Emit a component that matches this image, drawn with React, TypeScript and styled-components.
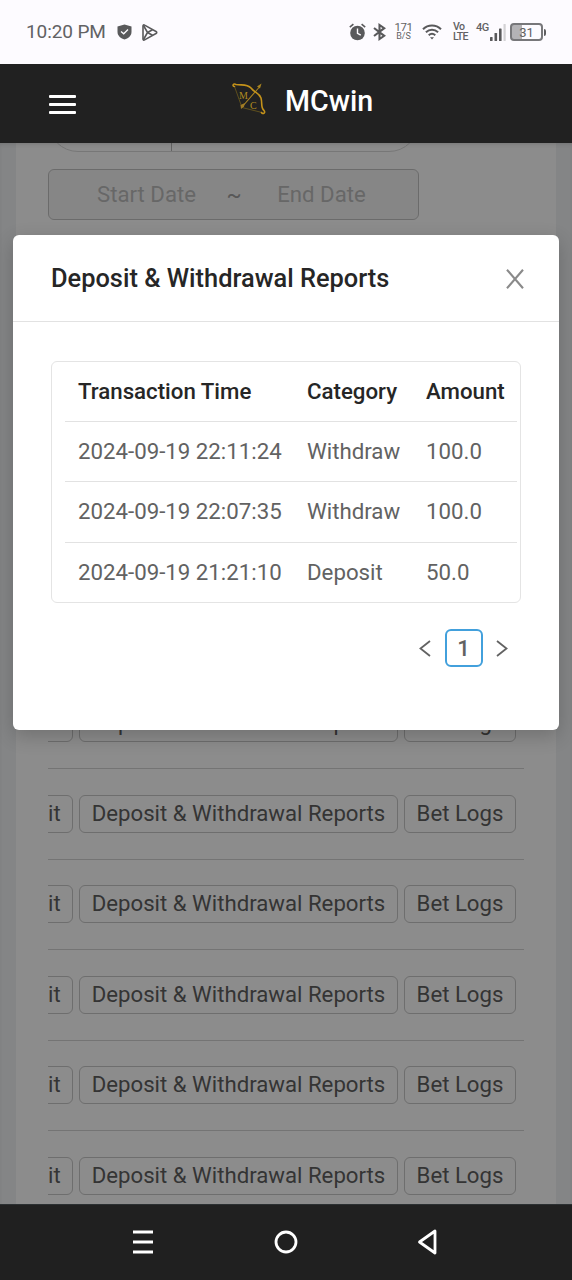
import React from "react";
import styled, { createGlobalStyle } from "styled-components";

const GlobalStyle = createGlobalStyle`
  * { box-sizing: border-box; }
  body { margin: 0; font-family: Roboto, sans-serif; background: #202020; }
  button { font-family: inherit; }
`;

const Screen = styled.div`
  width: 572px;
  height: 1280px;
  display: flex;
  flex-direction: column;
  overflow: hidden;
`;

const StatusBar = styled.div`
  height: 64px;
  flex: none;
  background: #fdfbff;
  color: #626264;
  display: flex;
  align-items: center;
  justify-content: space-between;
  padding: 0 26px 0 26px;
`;

const StatusGroup = styled.div<{ $gap: number }>`
  display: flex;
  align-items: center;
  gap: ${(p) => p.$gap}px;
  svg { display: block; flex: none; }
`;

const Clock = styled.span`
  font-size: 19px;
  letter-spacing: -0.1px;
  line-height: 24px;
  width: 78px;
  margin-right: 3px;
  white-space: nowrap;
`;

const Speed = styled.div`
  width: 18px;
  margin: -2px 2px 0 1px;
  display: flex;
  flex-direction: column;
  align-items: center;
  line-height: 10px;
  font-size: 11.5px;
  letter-spacing: -0.5px;
  span:last-child { font-size: 9px; letter-spacing: 0; line-height: 9px; }
`;

const Volte = styled.div`
  width: 23px;
  margin-left: 11px;
  display: flex;
  flex-direction: column;
  line-height: 10px;
  font-size: 10.6px;
  font-weight: 500;
  letter-spacing: -0.7px;
`;

const Network = styled.span`
  width: 14px;
  margin-top: -8px;
  font-size: 11px;
  line-height: 12px;
  font-weight: 500;
  letter-spacing: -0.5px;
`;

const Battery = styled.div`
  width: 33px;
  height: 18px;
  margin-left: 4px;
  border: 2px solid #77777a;
  border-radius: 4px;
  font-size: 13px;
  line-height: 13px;
  background: linear-gradient(90deg, #b4b3b6 10px, transparent 10px);
  display: flex;
  align-items: center;
  justify-content: center;
`;

const BatteryTip = styled.div`
  width: 2px;
  height: 7px;
  border-radius: 0 2px 2px 0;
  background: #5f5f61;
`;

const Header = styled.header`
  height: 79px;
  flex: none;
  background: #212121;
  display: flex;
  align-items: center;
  padding: 0 49px;
`;

const MenuButton = styled.div`
  width: 27px;
  margin-top: 2px;
  display: flex;
  flex-direction: column;
  gap: 5.5px;
  span { height: 2.8px; border-radius: 1px; background: #fff; }
`;

const Brand = styled.div`
  margin: -6px 0 0 154px;
  display: flex;
  align-items: center;
  gap: 17px;
  color: #fff;
  font-size: 28.6px;
  font-weight: 500;
  svg { display: block; margin-top: -5px; }
`;

const Content = styled.main`
  position: relative;
  flex: 1;
  min-height: 0;
  overflow: hidden;
  background: #f0f2f5;
`;

const Card = styled.section`
  height: 100%;
  margin: 0 16px;
  padding: 0 32px;
  background: #fff;
  overflow: hidden;
`;

const SearchGroup = styled.div`
  width: 371px;
  height: 60px;
  margin-top: -51px;
  border: 1px solid #d9d9d9;
  border-radius: 30px;
  display: flex;
`;

const SearchPrefix = styled.div`
  width: 123px;
  border-right: 1px solid #b4b4b4;
`;

const RangePicker = styled.div`
  width: 371px;
  height: 51px;
  margin-top: 17px;
  padding: 0 0 2px 20px;
  border: 1px solid #c4c4c4;
  border-radius: 6px;
  background: #f5f5f5;
  color: #bcbcbc;
  font-size: 22.2px;
  display: flex;
  align-items: center;
  span { text-align: center; width: 155px; }
  i { font-style: normal; width: 20px; text-align: center; color: #a0a0a0; }
`;

const UserList = styled.div`
  margin-top: 458.5px;
  width: 476px;
`;

const UserRow = styled.div`
  height: 90.55px;
  border-bottom: 1px solid #d4d4d4;
  overflow: hidden;
  display: flex;
  align-items: center;
  justify-content: flex-end;
  gap: 6px;
  padding-right: 8px;
`;

const ActionButton = styled.button<{ $width: number }>`
  flex: none;
  width: ${(p) => p.$width}px;
  height: 38px;
  padding: 0 0 2px;
  border: 1px solid #c8c8c8;
  border-radius: 6px;
  background: #fff;
  color: #5f5f5f;
  font-size: 22.2px;
  line-height: 34px;
  white-space: nowrap;
`;

const Mask = styled.div`
  position: absolute;
  inset: 0;
  background: rgba(0, 0, 0, 0.45);
  box-shadow: inset 0 3px 4px -2px rgba(0, 0, 0, 0.15);
`;

const Modal = styled.div`
  position: absolute;
  top: 92px;
  left: 13px;
  width: 546px;
  height: 495px;
  border-radius: 6px;
  background: #fff;
  box-shadow: 0 6px 19px rgba(0, 0, 0, 0.2);
`;

const ModalHeader = styled.div`
  height: 87px;
  border-bottom: 1px solid #e2e2e2;
  padding: 0 35px 0 38px;
  display: flex;
  align-items: center;
  justify-content: space-between;
  h2 { margin: 0; font-size: 25.4px; font-weight: 500; color: #262626; }
  svg { display: block; margin-top: 2px; }
`;

const ModalBody = styled.div`
  padding: 39px 38px 0;
`;

const Report = styled.div`
  height: 242px;
  border: 1px solid #e4e4e4;
  border-radius: 6px;
  padding: 0 3px 0 13px;
`;

const ReportRow = styled.div<{ $head?: boolean }>`
  height: ${(p) => (p.$head ? 60 : 60.3)}px;
  display: grid;
  grid-template-columns: 229px 119px 1fr;
  align-items: center;
  padding: 0 0 1px 13px;
  white-space: nowrap;
  border-bottom: 1px solid #e2e2e2;
  font-size: 22.25px;
  font-weight: ${(p) => (p.$head ? 500 : 400)};
  color: ${(p) => (p.$head ? "#262626" : "#626262")};
  &:last-child { border-bottom: 0; }
`;

const Pagination = styled.div`
  margin: 26px 13px 0 0;
  display: flex;
  align-items: center;
  justify-content: flex-end;
  gap: 13.5px;
  svg { display: block; }
`;

const Page = styled.span`
  width: 38px;
  height: 38px;
  border: 2px solid #42a0dc;
  border-radius: 6px;
  font-size: 22.2px;
  font-weight: 500;
  line-height: 34px;
  text-align: center;
  color: #626262;
`;

const NavBar = styled.nav`
  height: 76px;
  flex: none;
  background: #202020;
  border-top: 1px solid #2c3032;
  display: flex;
  align-items: center;
  justify-content: space-between;
  padding: 0 134px 2px 132px;
  svg { display: block; }
`;

const transactions = [
  ["2024-09-19 22:11:24", "Withdraw", "100.0"],
  ["2024-09-19 22:07:35", "Withdraw", "100.0"],
  ["2024-09-19 21:21:10", "Deposit", "50.0"],
];

const Logo = () => (
  <svg width="38" height="36" viewBox="0 0 38 36" fill="none">
    <path d="M4.500 6.500 L12 27.500 L32 32.500" stroke="#6d5a1c" strokeWidth="0.8" />
    <path d="M12 27 L29 7.500" stroke="#a98420" strokeWidth="1.1" />
    <path d="M27 6.500 L31.500 3.500 L30 8.500 Z" fill="#a98420" />
    <path d="M10.500 25 L15 23 L14 26.500 L11 29 Z" fill="#a07b25" />
    <path d="M4.500 6.500 C2 6.500 3 2.500 6 4.500 C12 5.500 17 3.500 21 8 C24 12.500 29 12.500 31 18 C32.500 23 30.500 28 34 30.500 C36 32.500 33 35 31.500 32.500" stroke="#c4921a" strokeWidth="1.6" strokeLinecap="round" />
    <text x="9" y="19" fontFamily="Liberation Serif, serif" fontSize="10" fill="#b08b20">M</text>
    <text x="20" y="28.500" fontFamily="Liberation Serif, serif" fontSize="10" fill="#b08b20">C</text>
  </svg>
);

const ShieldIcon = () => (
  <svg width="15" height="16" viewBox="0 0 15 16" fill="none">
    <path d="M7.500 0.500 L14.500 2.500 V8 C14.500 12 11 14.500 7.500 15.500 C4 14.500 0.500 12 0.500 8 V2.500 Z" fill="#59595b" />
    <path d="M4 7.500 L6.700 9.800 L11 5.500" stroke="#fdfbff" strokeWidth="1.300" />
  </svg>
);

const PlayIcon = () => (
  <svg width="16" height="17" viewBox="0 0 16 17" fill="none" stroke="#59595b" strokeWidth="1.600" strokeLinejoin="round">
    <path d="M1 2 C1 1 1.800 .6 2.600 1.100 L14 7.500 C15 8.100 15 8.900 14 9.500 L2.600 15.900 C1.800 16.400 1 16 1 15 Z" />
    <path d="M1.500 1.500 L5.500 8.500 L1.500 15.500 M5.500 8.500 L10.500 5.800 M5.500 8.500 L10.500 11.200" />
  </svg>
);

const AlarmIcon = () => (
  <svg width="17" height="18" viewBox="0 0 17 18" fill="none">
    <circle cx="8.500" cy="10" r="7.300" fill="#59595b" />
    <path d="M0.800 4.200 L4.400 1.200 M16.200 4.200 L12.600 1.200" stroke="#59595b" strokeWidth="1.600" />
    <path d="M8.500 5.500 V10.300 L11.800 12.200" stroke="#fdfbff" strokeWidth="1.400" />
  </svg>
);

const BluetoothIcon = () => (
  <svg width="13" height="18" viewBox="0 0 13 18" fill="none" stroke="#59595b" strokeWidth="2.100">
    <path d="M1 5 L11.200 12.800 L6.500 16 V2 L11.200 5.200 L1 13" />
  </svg>
);

const WifiIcon = () => (
  <svg width="20" height="16" viewBox="0 0 20 16" fill="none" stroke="#59595b" strokeWidth="2">
    <path d="M1 5.200 C6 .3 14 .3 19 5.200 M3.900 8.300 C7.500 5 12.500 5 16.100 8.300 M6.700 11.200 C8.700 9.500 11.300 9.500 13.300 11.200" />
    <path d="M8 13.200 H12 L10 15.600 Z" fill="#59595b" stroke="none" />
  </svg>
);

const SignalIcon = () => (
  <svg width="16" height="17" viewBox="0 0 16 17" fill="#59595b">
    <rect x="0" y="13" width="2.600" height="4" rx=".6" />
    <rect x="4.500" y="9" width="2.600" height="8" rx=".6" />
    <rect x="9" y="4.500" width="2.600" height="12.500" rx=".6" />
    <rect x="13.500" y="0" width="2.200" height="17" rx=".6" fill="#d3d2d5" />
  </svg>
);

const Chevron = ({ d }: { d: string }) => (
  <svg width="12" height="18" viewBox="0 0 12 18" fill="none" stroke="#626262" strokeWidth="1.800">
    <path d={d} />
  </svg>
);

export default function App() {
  return (
    <Screen>
      <GlobalStyle />
      <StatusBar>
        <StatusGroup $gap={10}>
          <Clock>10:20 PM</Clock>
          <ShieldIcon />
          <PlayIcon />
        </StatusGroup>
        <StatusGroup $gap={0}>
          <StatusGroup $gap={7.5}>
            <AlarmIcon />
            <BluetoothIcon />
            <Speed><span>171</span><span>B/S</span></Speed>
            <WifiIcon />
          </StatusGroup>
          <StatusGroup $gap={0}>
            <Volte><span>Vo</span><span>LTE</span></Volte>
            <Network>4G</Network>
            <SignalIcon />
          </StatusGroup>
          <StatusGroup $gap={1}>
            <Battery>31</Battery>
            <BatteryTip />
          </StatusGroup>
        </StatusGroup>
      </StatusBar>
      <Header>
        <MenuButton><span /><span /><span /></MenuButton>
        <Brand><Logo />MCwin</Brand>
      </Header>
      <Content>
        <Card>
          <SearchGroup><SearchPrefix /></SearchGroup>
          <RangePicker><span>Start Date</span><i>~</i><span>End Date</span></RangePicker>
          <UserList>
            {[0, 1, 2, 3, 4, 5].map((row) => (
              <UserRow key={row}>
                <ActionButton $width={62}>Edit</ActionButton>
                <ActionButton $width={319}>Deposit &amp; Withdrawal Reports</ActionButton>
                <ActionButton $width={112}>Bet Logs</ActionButton>
              </UserRow>
            ))}
          </UserList>
        </Card>
        <Mask />
        <Modal>
          <ModalHeader>
            <h2>Deposit &amp; Withdrawal Reports</h2>
            <svg width="18" height="20" viewBox="0 0 18 20" fill="none" stroke="#8a8a8a" strokeWidth="2.100">
              <path d="M1 .8 L17 19.200 M17 .8 L1 19.200" />
            </svg>
          </ModalHeader>
          <ModalBody>
            <Report>
              <ReportRow $head><span>Transaction Time</span><span>Category</span><span>Amount</span></ReportRow>
              {transactions.map((cells) => (
                <ReportRow key={cells[0]}>{cells.map((c, i) => <span key={i}>{c}</span>)}</ReportRow>
              ))}
            </Report>
            <Pagination>
              <Chevron d="M11 2 L1.500 9.500 L11 17" />
              <Page>1</Page>
              <Chevron d="M1 2 L10.500 9.500 L1 17" />
            </Pagination>
          </ModalBody>
        </Modal>
      </Content>
      <NavBar>
        <svg width="22" height="24" viewBox="0 0 22 24" stroke="#fff" strokeWidth="3">
          <path d="M1 2 H21 M1 12 H21 M1 22 H21" />
        </svg>
        <svg width="24" height="24" viewBox="0 0 24 24" fill="none" stroke="#fff" strokeWidth="2.800">
          <circle cx="12" cy="12" r="10" />
        </svg>
        <svg width="21" height="26" viewBox="0 0 21 26" fill="none" stroke="#fff" strokeWidth="2.800" strokeLinejoin="round">
          <path d="M18 2 V24 L2.500 13 Z" />
        </svg>
      </NavBar>
    </Screen>
  );
}
